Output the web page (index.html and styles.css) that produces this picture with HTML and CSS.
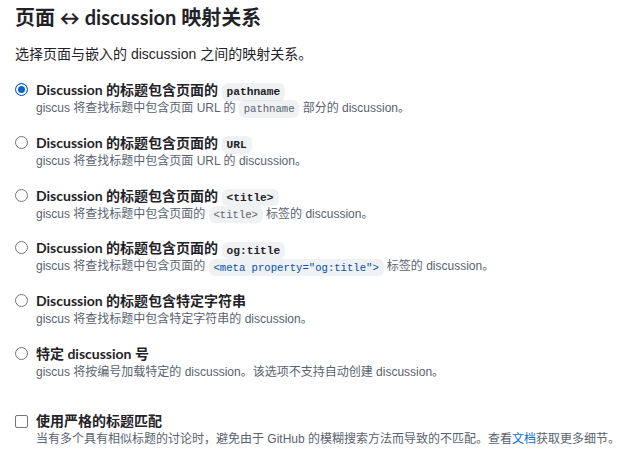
FILE: index.html
```html
<!DOCTYPE html>
<html lang="zh-CN">
<head>
<meta charset="utf-8">
<title>页面 ↔ discussion 映射关系</title>
<link rel="stylesheet" href="styles.css">
</head>
<body>
<main class="page">
  <h3 class="title">页面 ↔ discussion 映射关系</h3>
  <p class="lead">选择页面与嵌入的 discussion 之间的映射关系。</p>

  <div class="options">
    <label class="option">
      <span class="radio checked"></span>
      <span class="body">
        <span class="label">Discussion 的标题包含页面的 <code>pathname</code></span>
        <span class="desc">giscus 将查找标题中包含页面 URL 的 <code>pathname</code> 部分的 discussion。</span>
      </span>
    </label>
    <label class="option">
      <span class="radio"></span>
      <span class="body">
        <span class="label">Discussion 的标题包含页面的 <code>URL</code></span>
        <span class="desc">giscus 将查找标题中包含页面 URL 的 discussion。</span>
      </span>
    </label>
    <label class="option">
      <span class="radio"></span>
      <span class="body">
        <span class="label">Discussion 的标题包含页面的 <code>&lt;title&gt;</code></span>
        <span class="desc">giscus 将查找标题中包含页面的 <code>&lt;title&gt;</code> 标签的 discussion。</span>
      </span>
    </label>
    <label class="option">
      <span class="radio"></span>
      <span class="body">
        <span class="label">Discussion 的标题包含页面的 <code>og:title</code></span>
        <span class="desc">giscus 将查找标题中包含页面的 <code class="hl">&lt;meta property="og:title"&gt;</code> 标签的 discussion。</span>
      </span>
    </label>
    <label class="option">
      <span class="radio"></span>
      <span class="body">
        <span class="label">Discussion 的标题包含特定字符串</span>
        <span class="desc">giscus 将查找标题中包含特定字符串的 discussion。</span>
      </span>
    </label>
    <label class="option">
      <span class="radio"></span>
      <span class="body">
        <span class="label">特定 discussion 号</span>
        <span class="desc">giscus 将按编号加载特定的 discussion。该选项不支持自动创建 discussion。</span>
      </span>
    </label>
  </div>

  <label class="option strict">
    <span class="checkbox"></span>
    <span class="body">
      <span class="label">使用严格的标题匹配</span>
      <span class="desc">当有多个具有相似标题的讨论时，避免由于 GitHub 的模糊搜索方法而导致的不匹配。查看<a href="#" class="link">文档</a>获取更多细节。</span>
    </span>
  </label>
</main>
</body>
</html>
```

FILE: styles.css
```css
html, body {
  margin: 0;
  padding: 0;
  background: #ffffff;
}

body {
  font-family: "Liberation Sans", "Noto Sans CJK SC", sans-serif;
  color: #1f2328;
  font-size: 14px;
  line-height: 1.5;
}

.page {
  padding: 5px 6px 0 15px;
}

.title {
  margin: 0;
  height: 25px;
  font-family: "Lato", "Noto Sans CJK SC", sans-serif;
  font-size: 20px;
  line-height: 25px;
  font-weight: 700;
}

.lead {
  margin: 14px 0 0;
  height: 21px;
  font-size: 14px;
  line-height: 21px;
}

.options {
  display: flex;
  flex-direction: column;
  gap: 15.8px;
  margin-top: 15px;
}

.option {
  display: flex;
  align-items: flex-start;
  gap: 8px;
}

.body {
  display: flex;
  flex-direction: column;
  min-width: 0;
}

.label {
  height: 20px;
  font-family: "Lato", "Noto Sans CJK SC", sans-serif;
  font-weight: 700;
  font-size: 14px;
  line-height: 20px;
  white-space: nowrap;
}

.desc {
  height: 17px;
  font-size: 12px;
  line-height: 17px;
  color: #59636e;
  white-space: nowrap;
}

code {
  font-family: "Liberation Mono", "DejaVu Sans Mono", monospace;
  font-size: 10.6px;
  padding: 0.25em 0.45em;
  border-radius: 6px;
  background: rgba(175, 184, 193, 0.2);
}

.label code {
  font-size: 11.2px;
  font-weight: 700;
  color: #1f2328;
}

.desc code {
  color: #59636e;
}

.desc code.hl {
  color: #0550ae;
}

.radio {
  flex: none;
  box-sizing: border-box;
  width: 13px;
  height: 13px;
  margin-top: 3px;
  border: 1px solid #767676;
  border-radius: 50%;
  background: #fff;
}

.radio.checked {
  border-color: #0b63ce;
  background: #0b63ce;
  box-shadow: inset 0 0 0 2px #fff;
}

.checkbox {
  flex: none;
  box-sizing: border-box;
  width: 13px;
  height: 13px;
  margin-top: 4px;
  border: 1px solid #767676;
  border-radius: 2px;
  background: #fff;
}

.strict {
  margin-top: 30px;
}

.link {
  color: #0969da;
  text-decoration: none;
}
```
